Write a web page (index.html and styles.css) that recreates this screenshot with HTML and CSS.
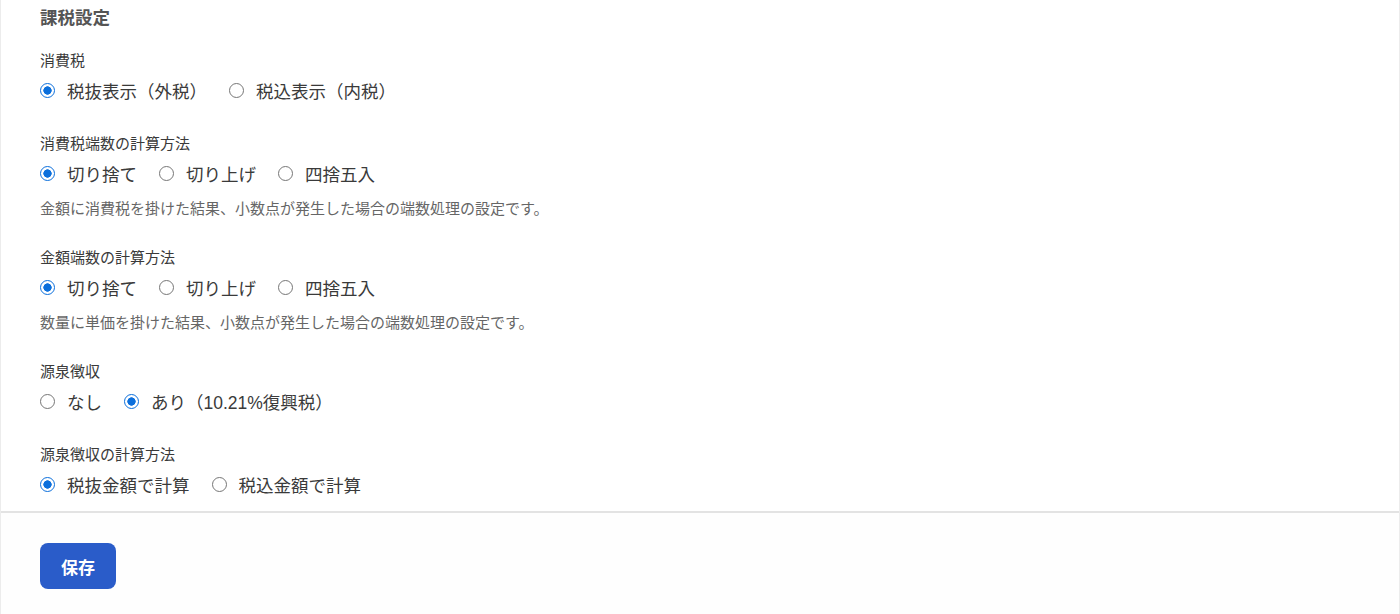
FILE: index.html
```html
<!DOCTYPE html>
<html lang="ja">
<head>
<meta charset="utf-8">
<title>課税設定</title>
<link rel="stylesheet" href="styles.css">
</head>
<body>
<div class="page">
  <section class="panel">
    <h2 class="title">課税設定</h2>

    <div class="group">
      <div class="label">消費税</div>
      <div class="options">
        <label class="opt"><input type="radio" name="tax" checked><span>税抜表示（外税）</span></label>
        <label class="opt"><input type="radio" name="tax"><span>税込表示（内税）</span></label>
      </div>
    </div>

    <div class="group">
      <div class="label">消費税端数の計算方法</div>
      <div class="options">
        <label class="opt"><input type="radio" name="taxround" checked><span>切り捨て</span></label>
        <label class="opt"><input type="radio" name="taxround"><span>切り上げ</span></label>
        <label class="opt"><input type="radio" name="taxround"><span>四捨五入</span></label>
      </div>
      <p class="help">金額に消費税を掛けた結果、小数点が発生した場合の端数処理の設定です。</p>
    </div>

    <div class="group">
      <div class="label">金額端数の計算方法</div>
      <div class="options">
        <label class="opt"><input type="radio" name="amtround" checked><span>切り捨て</span></label>
        <label class="opt"><input type="radio" name="amtround"><span>切り上げ</span></label>
        <label class="opt"><input type="radio" name="amtround"><span>四捨五入</span></label>
      </div>
      <p class="help">数量に単価を掛けた結果、小数点が発生した場合の端数処理の設定です。</p>
    </div>

    <div class="group">
      <div class="label">源泉徴収</div>
      <div class="options">
        <label class="opt"><input type="radio" name="wh"><span>なし</span></label>
        <label class="opt"><input type="radio" name="wh" checked><span>あり（10.21%復興税）</span></label>
      </div>
    </div>

    <div class="group">
      <div class="label">源泉徴収の計算方法</div>
      <div class="options">
        <label class="opt"><input type="radio" name="whcalc" checked><span>税抜金額で計算</span></label>
        <label class="opt"><input type="radio" name="whcalc"><span>税込金額で計算</span></label>
      </div>
    </div>
  </section>
  <footer class="footer">
    <button class="save" type="button">保存</button>
  </footer>
</div>
</body>
</html>
```
FILE: styles.css
```css
html, body {
  margin: 0;
  padding: 0;
  background: #ffffff;
}
body {
  font-family: "Liberation Sans", "Noto Sans CJK JP", sans-serif;
  color: #333333;
}
.page {
  height: 614px;
  border-left: 1px solid #ececec;
  border-right: 1px solid #ececec;
  box-sizing: border-box;
  background: #fefefe;
}
.panel {
  padding: 6px 39px 10px;
  border-bottom: 2px solid #e3e3e3;
  background: #ffffff;
}
.title {
  margin: 0 0 19px;
  font-size: 17.5px;
  line-height: 24px;
  font-weight: bold;
  color: #555555;
}
.group {
  margin-bottom: 25px;
}
.group:last-child {
  margin-bottom: 0;
}
.label {
  font-size: 15px;
  line-height: 24px;
  color: #3a3a3a;
}
.options {
  display: flex;
  align-items: center;
  height: 34px;
}
.opt {
  display: flex;
  align-items: center;
  margin-right: 22px;
  font-size: 17.5px;
  color: #3a3a3a;
  cursor: pointer;
}
.opt input {
  appearance: none;
  -webkit-appearance: none;
  margin: 0 12px 0 0;
  width: 15px;
  height: 15px;
  border: 1px solid #767676;
  border-radius: 50%;
  box-sizing: border-box;
  background: #ffffff;
}
.opt input:checked {
  border: 1.5px solid #0b6fdc;
  background: radial-gradient(circle, #0b6fdc 0 3.9px, #ffffff 4.4px);
}
.help {
  margin: 7px 0 0;
  font-size: 15px;
  line-height: 24px;
  color: #666666;
}
.footer {
  padding: 30px 39px;
}
.save {
  width: 76px;
  height: 46px;
  border: none;
  border-radius: 8px;
  background: #2a5cc9;
  color: #ffffff;
  font-family: "Liberation Sans", "Noto Sans CJK JP", sans-serif;
  font-size: 17px;
  font-weight: bold;
  cursor: pointer;
}
```
